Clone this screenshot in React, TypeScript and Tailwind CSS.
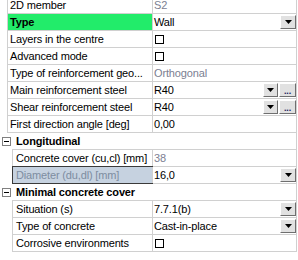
import React from "react";

type Value =
  | { type: "text"; text: string; muted?: boolean }
  | { type: "combo"; text: string; more?: boolean }
  | { type: "check" }
  | { type: "none" };

type Item =
  | { kind: "header"; label: string }
  | { kind: "prop"; label: string; value: Value; child?: boolean; bold?: boolean; green?: boolean; selected?: boolean };

const items: Item[] = [
  { kind: "prop", label: "2D member", value: { type: "text", text: "S2", muted: true } },
  { kind: "prop", label: "Type", bold: true, green: true, value: { type: "combo", text: "Wall" } },
  { kind: "prop", label: "Layers in the centre", value: { type: "check" } },
  { kind: "prop", label: "Advanced mode", value: { type: "check" } },
  { kind: "prop", label: "Type of reinforcement geo...", value: { type: "text", text: "Orthogonal", muted: true } },
  { kind: "prop", label: "Main reinforcement steel", value: { type: "combo", text: "R40", more: true } },
  { kind: "prop", label: "Shear reinforcement steel", value: { type: "combo", text: "R40", more: true } },
  { kind: "prop", label: "First direction angle [deg]", value: { type: "text", text: "0,00" } },
  { kind: "header", label: "Longitudinal" },
  { kind: "prop", child: true, label: "Concrete cover (cu,cl) [mm]", value: { type: "text", text: "38", muted: true } },
  { kind: "prop", child: true, selected: true, label: "Diameter (du,dl) [mm]", value: { type: "combo", text: "16,0" } },
  { kind: "header", label: "Minimal concrete cover" },
  { kind: "prop", child: true, label: "Situation (s)", value: { type: "combo", text: "7.7.1(b)" } },
  { kind: "prop", child: true, label: "Type of concrete", value: { type: "combo", text: "Cast-in-place" } },
  { kind: "prop", child: true, label: "Corrosive environments", value: { type: "check" } },
];

function ArrowButton({ w = "w-[16px]" }: { w?: string }) {
  return (
    <div className={`flex h-[14px] ${w} shrink-0 items-center justify-center border border-t-white border-l-white border-r-[#6f6f6f] border-b-[#6f6f6f] bg-[#e1e1e1]`}>
      <svg width="7" height="4" viewBox="0 0 7 4">
        <path d="M0 0H7L3.5 4Z" fill="#000" />
      </svg>
    </div>
  );
}

function MoreButton() {
  return (
    <div className="flex h-[14px] w-[17px] shrink-0 items-end justify-center border border-t-white border-l-white border-r-[#6f6f6f] border-b-[#6f6f6f] bg-[#e1e1e1] pb-[1px] text-[9px] leading-[8px] font-bold text-[#202060]">
      ...
    </div>
  );
}

function ValueCell({ value }: { value: Value }) {
  if (value.type === "check") {
    return (
      <div className="flex h-full items-center pl-[2px]">
        <div className="h-[9px] w-[9px] border border-black bg-white" />
      </div>
    );
  }
  if (value.type === "combo") {
    return (
      <div className="flex h-full items-center">
        <span className="flex-1 pl-[1px] text-black">{value.text}</span>
        {value.more ? (
          <div className="flex items-center gap-[1px]">
            <ArrowButton w="w-[15px]" />
            <MoreButton />
          </div>
        ) : (
          <ArrowButton />
        )}
      </div>
    );
  }
  if (value.type === "text") {
    return (
      <div className={`flex h-full items-center pl-[1px] ${value.muted ? "text-[#7b8092]" : "text-black"}`}>
        {value.text}
      </div>
    );
  }
  return null;
}

function CollapseBox() {
  return (
    <div className="flex h-[9px] w-[9px] items-center justify-center border border-[#808080] bg-white">
      <div className="h-[1px] w-[5px] bg-black" />
    </div>
  );
}

export default function App() {
  return (
    <div className="h-[260px] w-[298px] overflow-hidden bg-white text-[11px] tracking-[-0.15px] text-black [font-family:'Liberation_Sans',Arial,sans-serif]">
      <div className="-mt-[3px] flex w-[297px] flex-col">
        {items.map((item, i) => {
          if (item.kind === "header") {
            return (
              <div key={i} className="flex h-[17px]">
                <div className="flex w-[12px] shrink-0 items-center pl-[2px]">
                  <CollapseBox />
                </div>
                <div className="flex flex-1 items-center border-b border-r border-[#d0d0d0] pl-[4px] font-bold">
                  {item.label}
                </div>
              </div>
            );
          }
          return (
            <div key={i} className="flex h-[17px]">
              <div className={`${item.child ? "w-[12px]" : "w-[7px]"} shrink-0`} />
              <div className="flex flex-1 border-b border-l border-r border-[#d0d0d0]">
                <div
                  className={`flex shrink-0 items-center ${item.child ? "w-[139px] pl-[3px]" : "w-[144px] pl-[2px]"} ${
                    item.green ? "bg-[#22ec6a]" : item.selected ? "bg-[#c6d2e0] text-[#7d8da0] outline outline-[#3a3a3a]" : "bg-white"
                  } ${item.bold ? "font-bold" : ""}`}
                >
                  <span className="whitespace-nowrap">{item.label}</span>
                </div>
                <div className="flex-1 border-l border-[#d0d0d0] bg-white">
                  <ValueCell value={item.value} />
                </div>
              </div>
            </div>
          );
        })}
      </div>
    </div>
  );
}
